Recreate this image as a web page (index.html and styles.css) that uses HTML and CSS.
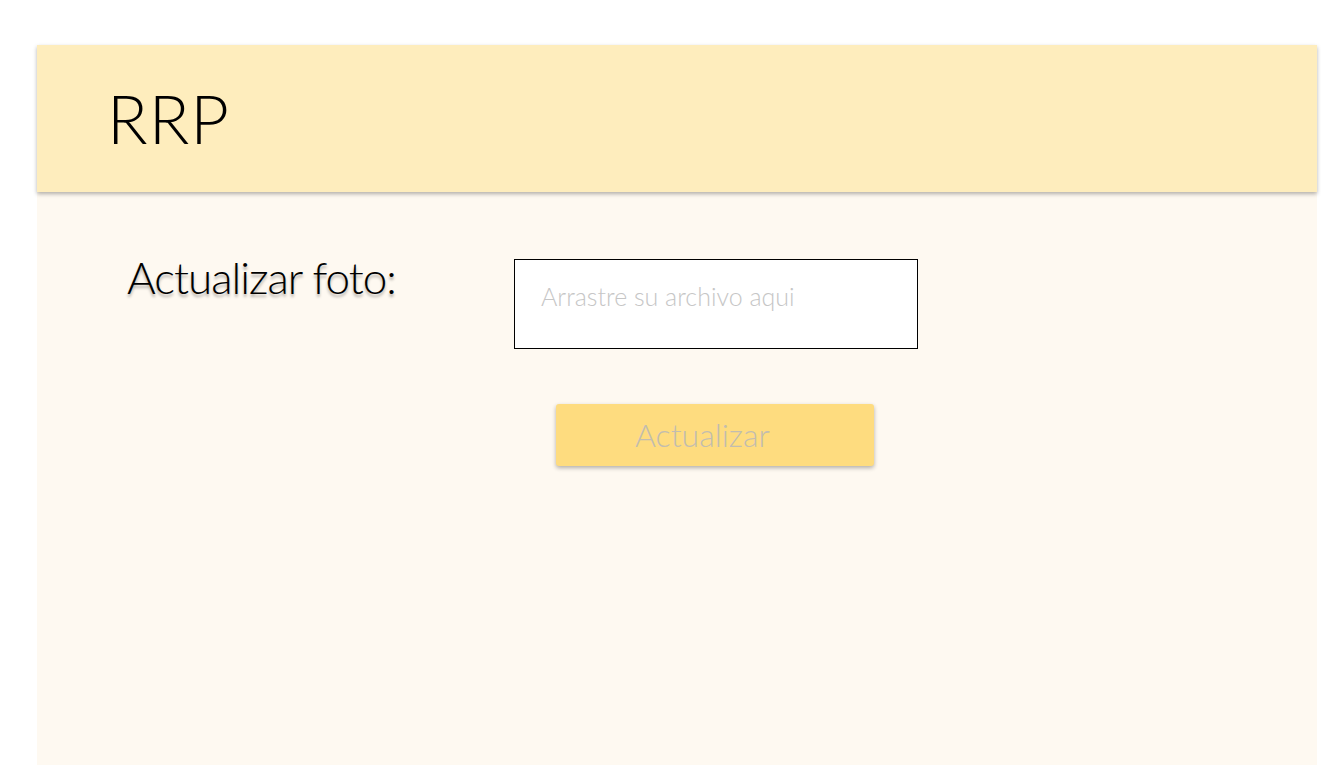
FILE: index.html
```html
<!DOCTYPE html>
<html lang="es">
<head>
<meta charset="utf-8">
<title>RRP</title>
<link rel="stylesheet" href="styles.css">
</head>
<body>
<div class="page">
  <header class="header">
    <h1 class="logo">RRP</h1>
  </header>
  <main class="content">
    <div class="row">
      <label class="label">Actualizar foto:</label>
      <div class="dropzone"><span class="placeholder">Arrastre su archivo aqui</span></div>
    </div>
    <button class="btn" type="button"><span class="btn-text">Actualizar</span></button>
  </main>
</div>
</body>
</html>
```
FILE: styles.css
```css
html, body {
  margin: 0;
  padding: 0;
  background: #ffffff;
}
body {
  font-family: Lato, "Open Sans", sans-serif;
  overflow: hidden;
}
.page {
  margin: 45px 0 0 37px;
  width: 1280px;
  height: 720px;
  display: flex;
  flex-direction: column;
}
.header {
  height: 147px;
  flex: none;
  background: #feedbd;
  box-shadow: 0 2px 4px rgba(0, 0, 0, 0.3);
  position: relative;
  z-index: 1;
  display: flex;
  align-items: flex-start;
  padding-left: 70px;
}
.logo {
  margin: 0;
  margin-top: 33px;
  font-weight: 300;
  font-size: 67px;
  line-height: 80px;
  letter-spacing: 1px;
  color: #000;
}
.content {
  flex: 1;
  background: #fef9f1;
  padding: 67px 0 0 90px;
}
.row {
  display: flex;
  align-items: flex-start;
}
.label {
  width: 387px;
  font-size: 44px;
  font-weight: 300;
  line-height: 44px;
  letter-spacing: -1px;
  margin-top: -4px;
  color: #000;
  text-shadow: 0 3px 3px rgba(0, 0, 0, 0.3);
}
.dropzone {
  height: 88px;
  border: 1px solid #000;
  background: #fff;
  padding: 0 0 0 26px;
  box-sizing: content-box;
  width: 376px;
}
.placeholder {
  display: block;
  margin-top: 21px;
  font-size: 25px;
  font-weight: 300;
  line-height: 30px;
  color: #c6c6c6;
}
.btn {
  display: block;
  margin: 55px 0 0 429px;
  width: 318px;
  height: 62px;
  border: none;
  border-radius: 3px;
  background: #fedc7f;
  box-shadow: 0 2px 4px rgba(0, 0, 0, 0.3);
  font-family: inherit;
  padding: 0 0 0 79px;
  text-align: left;
}
.btn-text {
  font-size: 32px;
  font-weight: 300;
  color: #c2bdb0;
  line-height: 36px;
}
```
